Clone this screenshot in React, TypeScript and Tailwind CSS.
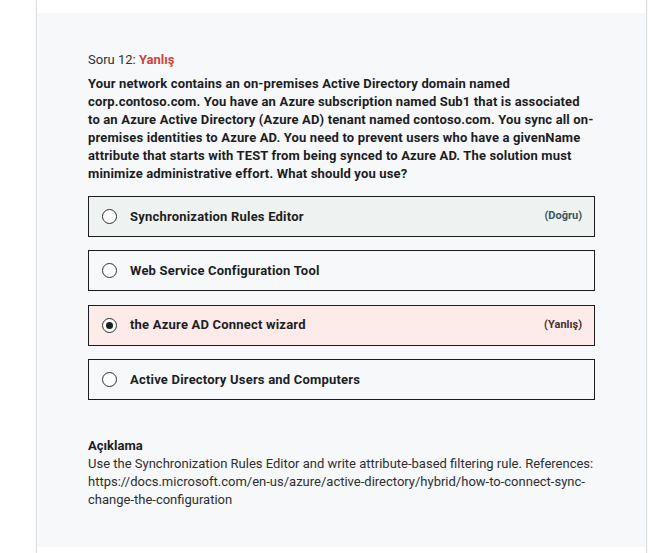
const options = [
  { text: "Synchronization Rules Editor", note: "(Doğru)", state: "correct" },
  { text: "Web Service Configuration Tool", note: "", state: "" },
  { text: "the Azure AD Connect wizard", note: "(Yanlış)", state: "wrong" },
  { text: "Active Directory Users and Computers", note: "", state: "" },
];

// line breaks follow the original wrapping
const question = [
  "Your network contains an on-premises Active Directory domain named",
  "corp.contoso.com. You have an Azure subscription named Sub1 that is associated",
  "to an Azure Active Directory (Azure AD) tenant named contoso.com. You sync all on-",
  "premises identities to Azure AD. You need to prevent users who have a givenName",
  "attribute that starts with TEST from being synced to Azure AD. The solution must",
  "minimize administrative effort. What should you use?",
];

export default function App() {
  return (
    <div className="min-h-[553px] bg-white pl-[36px] pr-[22px] font-['Roboto',sans-serif] text-[#1c1d1f]">
      <div className="border-x border-[#dcdfe3] shadow-[0_0_2px_rgba(0,0,0,0.08)]">
        <div className="h-[13px] bg-white" />
        <div className="bg-[#f7f8fa] px-[51px] pt-[38px] pb-[38px]">
          <div className="text-[13px] leading-[18px] text-[#2d2f31]">
            Soru 12: <span className="font-bold text-[#d0433a]">Yanlış</span>
          </div>
          <p className="mt-[6px] text-[13px] font-bold leading-[18px] tracking-[0.15px]">
            {question.map((line) => (
              <span key={line} className="block whitespace-nowrap">
                {line}
              </span>
            ))}
          </p>
          <ul className="mt-[13px] flex flex-col gap-[13.3px]">
            {options.map((o) => (
              <li
                key={o.text}
                className={`flex h-[41px] items-center border border-[#1c1d1f] pl-[13px] pr-[12px] ${
                  o.state === "correct"
                    ? "bg-[#eef3f1]"
                    : o.state === "wrong"
                    ? "bg-[#fcebe8]"
                    : "bg-[#f7f8fa]"
                }`}
              >
                <span className="flex h-[15px] w-[15px] items-center justify-center rounded-full border-[1.5px] border-[#2d2f31] bg-white">
                  {o.state === "wrong" && (
                    <span className="h-[7px] w-[7px] rounded-full bg-[#1c1d1f]" />
                  )}
                </span>
                <span className="ml-[13px] flex-1 text-[13px] font-bold tracking-[0.2px]">
                  {o.text}
                </span>
                {o.note && (
                  <span
                    className={`text-[11px] font-bold ${
                      o.state === "correct" ? "text-[#3b5560]" : "text-[#4a2f2a]"
                    }`}
                  >
                    {o.note}
                  </span>
                )}
              </li>
            ))}
          </ul>
          <div className="mt-[37px] text-[13px] leading-[18px]">
            <div className="font-bold">Açıklama</div>
            <p className="text-[#2d2f31]">
              Use the Synchronization Rules Editor and write attribute-based
              filtering rule. References:
              https://docs.microsoft.com/en-us/azure/active-directory/hybrid/how-to-connect-sync-change-the-configuration
            </p>
          </div>
        </div>
        <div className="h-[8px] bg-white" />
      </div>
    </div>
  );
}
